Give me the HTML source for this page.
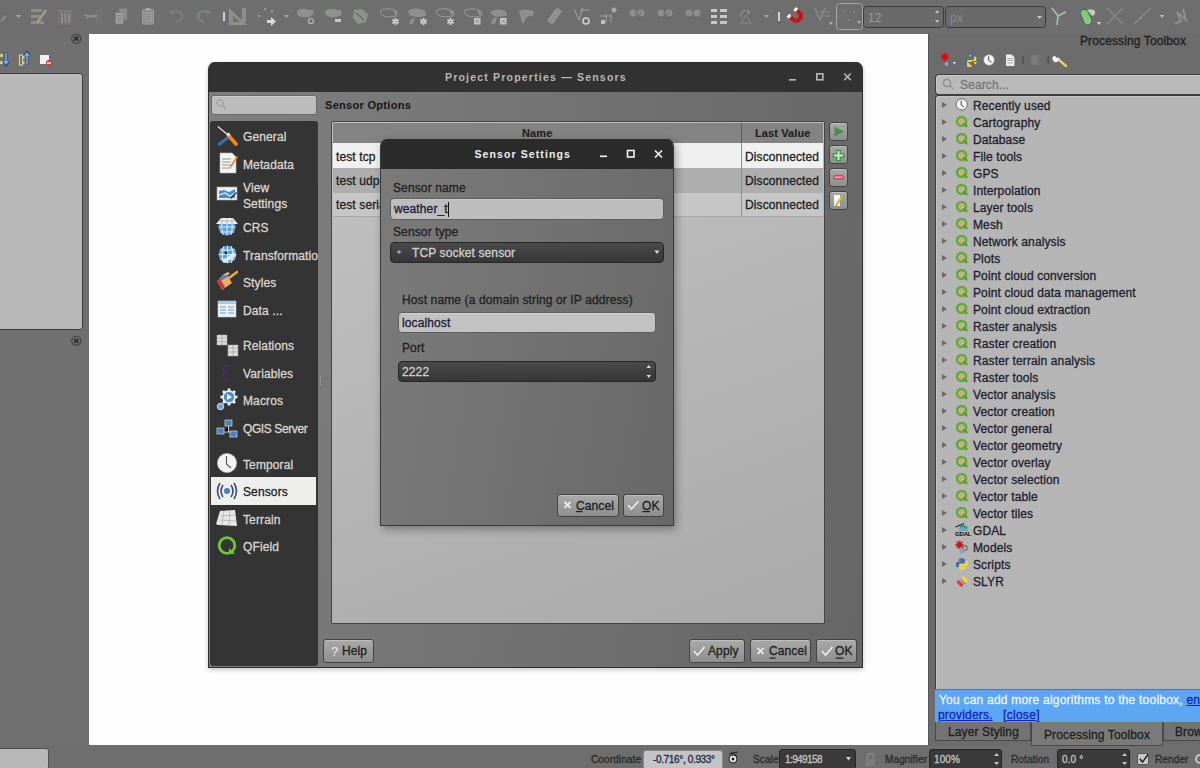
<!DOCTYPE html>
<html><head><meta charset="utf-8">
<style>
*{box-sizing:border-box}
html,body{margin:0;padding:0}
body{width:1200px;height:768px;position:relative;overflow:hidden;background:#6f6f6f;font-family:"Liberation Sans",sans-serif;font-size:12px;color:#1e1e1e}
.a{position:absolute}
.t{position:absolute;white-space:nowrap;line-height:1;-webkit-text-stroke-width:0.3px;letter-spacing:0.12px}
svg{position:absolute;overflow:visible}
.btn{position:absolute;border:1px solid #444;border-radius:3px;background:linear-gradient(#a9a9a9,#8e8e8e);box-shadow:inset 0 1px 0 rgba(255,255,255,.25)}
.ico{position:absolute}
</style></head><body>
<!-- top toolbar -->
<div class="a" style="left:0;top:0;width:1200px;height:34px;background:#6e6e6e"></div>
<!-- left dock -->
<div class="a" style="left:0;top:34px;width:89px;height:711px;background:#707070"></div>
<div class="a" style="left:-3px;top:73px;width:86px;height:257px;background:#b8b8b8;border:1px solid #3c3c3c;border-radius:3px"></div>
<!-- canvas -->
<div class="a" style="left:89px;top:34px;width:839px;height:711px;background:#fefefe"></div>
<!-- right dock -->
<div class="a" style="left:928px;top:34px;width:272px;height:711px;background:#6c6c6c;border-left:1px solid #555"></div>
<!-- status bar -->
<div class="a" style="left:0;top:745px;width:1200px;height:23px;background:#6e6e6e"></div>
<!-- toolbar icons -->
<svg style="left:0;top:0" width="1200" height="34">
<g fill="#8c8c8a" stroke="none">
 <!-- partial pencil -->
 <path d="M0 20 L5 15 L7 17 L2 22Z" fill="#858583"/>
 <path d="M16 15h5l-2.5 3z" fill="#a8a8a8"/>
 <!-- edit -->
 <rect x="31" y="9" width="11" height="3" fill="#8e8e86"/><rect x="31" y="15" width="9" height="3" fill="#8e8e86"/><rect x="31" y="21" width="13" height="3" fill="#8e8e86"/>
 <path d="M36 22 L45 9 L47 11 L38 24Z" fill="#9a9a90"/>
 <!-- trash -->
 <rect x="58" y="10" width="14" height="2" fill="#877c7c"/><rect x="59" y="12" width="12" height="12" fill="none" stroke="#867676" stroke-width="1"/>
 <rect x="61" y="13" width="2" height="10" fill="#8e8e8e"/><rect x="64.5" y="13" width="2" height="10" fill="#8e8e8e"/><rect x="68" y="13" width="2" height="10" fill="#8e8e8e"/>
 <!-- scissors -->
 <path d="M84 15 L97 17 M86 18 L97 15" stroke="#8d8d8d" stroke-width="1.3" fill="none"/><circle cx="99" cy="13" r="2.6" fill="none" stroke="#7a7a7a" stroke-width="1.2"/><circle cx="99" cy="20" r="2.6" fill="none" stroke="#7a7a7a" stroke-width="1.2"/>
 <!-- copy -->
 <rect x="119" y="8.5" width="8" height="11" fill="#8e8e8e" stroke="#7a7a7a" stroke-width=".8"/><rect x="115.5" y="12.5" width="8" height="11.5" fill="#a0a0a0" stroke="#7a7a7a" stroke-width=".8"/><path d="M117 15.5h5M117 17.5h5M117 19.5h5M117 21.5h4" stroke="#808080" stroke-width=".8"/>
 <!-- paste -->
 <rect x="142.5" y="9.5" width="11" height="14.5" rx="1" fill="#8a8a8a" stroke="#a0a0a0" stroke-width="1"/><rect x="145" y="12" width="7" height="10" fill="#9e9e9e"/><path d="M146 14.5h5M146 16.5h5M146 18.5h5M146 20.5h4" stroke="#808080" stroke-width=".8"/><rect x="145.5" y="8" width="5" height="2.5" fill="#a8a8a8"/>
 <!-- undo / redo -->
 <path d="M171 13 Q176 9 181 13 Q184 17 179 21 L176 22" fill="none" stroke="#7f7a7a" stroke-width="2.5"/><path d="M169 12 L174 10 L173 16Z" fill="#7f7a7a"/>
 <path d="M209 13 Q204 9 199 13 Q196 17 201 21 L204 22" fill="none" stroke="#7c8080" stroke-width="2.5"/><path d="M211 12 L206 10 L207 16Z" fill="#7c8080"/>
 <rect x="223" y="12" width="2" height="9" fill="#d0d0d0"/>
 <!-- ruler -->
 <path d="M229 8 L247 25 L229 25Z" fill="#8e8e8a"/><path d="M233 16 L240 22 L233 22Z" fill="#6e6e6e"/><rect x="242" y="8" width="4" height="14" fill="#8e8e80"/>
 <!-- dots arrow -->
 <circle cx="265" cy="9" r="1.2" fill="#9a9a9a"/><circle cx="272" cy="11" r="1.2" fill="#9a9a9a"/><circle cx="259" cy="16" r="1.2" fill="#9a9a9a"/>
 <path d="M267 20 h4 v-3 l5 4.5 -5 4.5 v-3 h-4z" fill="#d8d8d8"/>
 <path d="M284 15h5l-2.5 3z" fill="#a8a8a8"/>
 <!-- blobs -->
 <path d="M297 11 Q302 7 309 10 Q315 9 313 15 Q309 18 302 17 Q296 16 297 11Z" fill="#8e908e"/><circle cx="311" cy="21" r="2.5" fill="none" stroke="#b8b8b8" stroke-width="1.2"/>
 <path d="M325 11 Q330 7 337 10 Q343 9 341 15 Q337 18 330 17 Q324 16 325 11Z" fill="#8e908e"/><rect x="335" y="19" width="6" height="3" fill="#c8c8c8"/>
 <path d="M354 10 L362 9 L368 14 L366 22 L358 24 L353 18Z" fill="#8f918f"/><path d="M356 13 L364 20" stroke="#555" stroke-width="1"/>
 <path d="M381 10 Q388 7 394 10 Q398 12 396 16 Q390 18 384 16 Q379 14 381 10Z" fill="none" stroke="#999" stroke-width="1"/><path d="M393 10 Q400 9 396 17Z" fill="#8e908e"/><g transform="translate(395.5,21.5)"><path d="M0 -3.6V3.6M-3.1 -1.8L3.1 1.8M3.1 -1.8L-3.1 1.8" stroke="#d2d2d2" stroke-width="1.6"/><circle r="1.9" fill="#d2d2d2"/><circle r=".8" fill="#888"/></g>
 <path d="M409 10 Q416 7 423 10 Q428 12 425 16 Q418 18 412 16 Q407 14 409 10Z" fill="#8e908e"/><path d="M411 19 L415 18 L413 24 L409 24Z" fill="#8e8e8e"/><g transform="translate(423.5,21.5)"><path d="M0 -3.6V3.6M-3.1 -1.8L3.1 1.8M3.1 -1.8L-3.1 1.8" stroke="#d2d2d2" stroke-width="1.6"/><circle r="1.9" fill="#d2d2d2"/><circle r=".8" fill="#888"/></g>
 <path d="M437 10 Q444 7 451 10 Q456 12 453 16 Q446 18 440 16 Q435 14 437 10Z" fill="none" stroke="#9a9a9a" stroke-width="1"/><path d="M449 11 Q455 10 452 16Z" fill="#8e908e"/><g transform="translate(450.5,21.5)"><path d="M0 -3.6V3.6M-3.1 -1.8L3.1 1.8M3.1 -1.8L-3.1 1.8" stroke="#d2d2d2" stroke-width="1.6"/><circle r="1.9" fill="#d2d2d2"/><circle r=".8" fill="#888"/></g>
 <path d="M465 10 Q472 7 479 10 Q484 12 481 16 Q474 18 468 16 Q463 14 465 10Z" fill="none" stroke="#999" stroke-width="1"/><path d="M477 11 Q483 10 480 16Z" fill="#8e908e"/><rect x="474.0" y="18.0" width="6.5" height="6.5" fill="#c4c4c4"/><path d="M475.5 19.5L479.0 23.0M479.0 19.5L475.5 23.0" stroke="#8a8a8a" stroke-width="1"/>
 <path d="M491 11 Q498 8 505 11 Q508 13 506 16 Q500 17 494 16 Q490 14 491 11Z" fill="#8e908e"/><path d="M493 18 L497 17 L495 24 L491 24Z" fill="#8e8e8e"/><rect x="500.0" y="18.0" width="6.5" height="6.5" fill="#c4c4c4"/><path d="M501.5 19.5L505.0 23.0M505.0 19.5L501.5 23.0" stroke="#8a8a8a" stroke-width="1"/>
 <path d="M519 11 Q525 8 533 11 Q535 14 532 16 Q526 16 525 20 L523 24 Q520 18 519 11Z" fill="#8e908e"/>
 <path d="M548 20 L556 9 Q560 8 561 12 L553 23 Q549 24 548 20Z" fill="#8e908e" stroke="#9c9c9c" stroke-width=".8"/>
 <path d="M574 9 L579 20 L583 8 M580 10 h10" fill="none" stroke="#a2a2a2" stroke-width="1"/><circle cx="586" cy="21" r="3" fill="none" stroke="#d0d0d0" stroke-width="1.5"/>
 <path d="M600 16 h12 M606 14 v9 M611 14 v9" stroke="#9a9a9a" stroke-width="1"/><circle cx="614" cy="10" r="2.5" fill="#a8a8a8"/><rect x="601" y="20" width="4" height="4" fill="#c0c0c0"/>
 <circle cx="633" cy="13" r="3.5" fill="#8e8e8e"/><circle cx="641" cy="13" r="3.5" fill="#8e8e8e"/><path d="M635 24 L641 12 M643 24 L635 12" stroke="#6a6a6a" stroke-width="1"/>
 <circle cx="661" cy="13" r="3.5" fill="#8e8e8e"/><circle cx="669" cy="13" r="3.5" fill="#8e8e8e"/><path d="M663 24 L669 12 M671 24 L663 12" stroke="#6a6a6a" stroke-width="1"/>
 <circle cx="689" cy="13" r="3.5" fill="#8e8e8e"/><circle cx="697" cy="13" r="3.5" fill="#8e8e8e"/><path d="M689 17 Q690 22 693 24" stroke="#6a6a6a" stroke-width="1" fill="none"/>
 <rect x="711" y="9" width="6" height="3" fill="#c8c8c8"/><rect x="720" y="9" width="7" height="3" fill="#c8c8c8"/><rect x="711" y="15" width="6" height="3" fill="#c8c8c8"/><rect x="720" y="15" width="7" height="3" fill="#c8c8c8"/><rect x="711" y="21" width="6" height="3" fill="#c8c8c8"/><rect x="720" y="21" width="7" height="3" fill="#c8c8c8"/>
 <path d="M747 9 L751 12 L747 15Z" fill="#8a8a8a"/><path d="M741 23 L746 15 L751 23Z" fill="none" stroke="#8a8a8a" stroke-width="1"/><path d="M746 10 A6 6 0 0 0 741 17" fill="none" stroke="#858585" stroke-width="2"/>
 <path d="M764 15h5l-2.5 3z" fill="#a8a8a8"/>
 <rect x="778" y="12" width="2" height="9" fill="#cfcfcf"/>
 <!-- magnet -->
 <path d="M789.5 16 L793.2 19.7 A4.7 4.7 0 0 0 799.8 13.1 L796.1 9.4" fill="none" stroke="#c81414" stroke-width="4"/>
 <path d="M786.6 16.6 L789.4 13.8 L791.5 15.9 L788.7 18.7Z" fill="#fafafa"/><path d="M793.4 9.8 L796.2 7 L798.3 9.1 L795.5 11.9Z" fill="#fafafa"/>
 <path d="M815 8 L820 20 L825 8 M820 12 h10 M822 16 h8" fill="none" stroke="#8e8e8e" stroke-width="1.2"/><path d="M829 22h4l-2 3z" fill="#b0b0b0"/>
</g>
<rect x="836.5" y="3.5" width="26" height="26" rx="3" fill="none" stroke="#a6a6a6" stroke-width="1"/>
<circle cx="844" cy="11" r=".8" fill="#9a9a9a"/><circle cx="854" cy="12" r=".8" fill="#9a9a9a"/><circle cx="849" cy="20" r=".8" fill="#9a9a9a"/><path d="M857 21h4l-2 3z" fill="#b0b0b0"/>
<rect x="863.5" y="6.5" width="80" height="21" rx="3" fill="#6a6a6a" stroke="#3c3c3c" stroke-width="1"/>
<text x="868" y="22" font-family="Liberation Sans" font-size="12" fill="#9c9c9c">12</text>
<path d="M935 13 l2.2 -3 2.2 3z M935 20 l2.2 3 2.2 -3z" fill="#c0c0c0"/>
<rect x="945.5" y="6.5" width="100" height="21" rx="3" fill="#6a6a6a" stroke="#3c3c3c" stroke-width="1"/>
<text x="950" y="22" font-family="Liberation Sans" font-size="12" fill="#8c8c8c">px</text>
<path d="M1037 16 l2.5 3 2.5 -3z" fill="#c8c8c8"/>
<!-- green icons -->
<path d="M1052 8 L1058 16 L1066 12 M1058 16 L1057 25" fill="none" stroke="#9ec89a" stroke-width="1.6"/>
<path d="M1080 13 Q1082 8 1087 10 L1091 18 Q1093 24 1088 25 Q1084 25 1083 20Z" fill="#86c97e" stroke="#3a5a3a" stroke-width=".8"/><path d="M1087 10 Q1092 8 1095 11 Q1096 15 1092 16Z" fill="#c8c8c8"/>
<path d="M1097 22h4l-2 3z" fill="#d0d0d0"/>
<path d="M1107 8 L1123 24 M1123 8 L1107 24" stroke="#8a8a8a" stroke-width="1.2"/>
<path d="M1134 24 L1151 8" stroke="#8a8a8a" stroke-width="1.2"/><path d="M1140 17 l2 2" stroke="#9ab090" stroke-width="1"/>
<path d="M1160 15h4l-2 3z" fill="#c0c0c0"/>
<path d="M1175 24 L1181 21 L1177 12 L1186 20 L1183 9" fill="none" stroke="#8e8e8e" stroke-width="2"/>
</svg>
<!-- left dock items -->
<svg style="left:70px;top:32px" width="13" height="13"><circle cx="6.3" cy="6.7" r="4.6" fill="#6c6c6c" stroke="#404040" stroke-width="1.1"/><path d="M4.2 4.6L8.4 8.8M8.4 4.6L4.2 8.8" stroke="#262626" stroke-width="1.4"/></svg>
<svg style="left:70px;top:334px" width="13" height="13"><circle cx="6.3" cy="6.8" r="4.6" fill="#6c6c6c" stroke="#404040" stroke-width="1.1"/><path d="M4.2 4.7L8.4 8.9M8.4 4.7L4.2 8.9" stroke="#262626" stroke-width="1.4"/></svg>
<svg style="left:0;top:50px" width="60" height="18">
 <rect x="0" y="4" width="3" height="3" fill="#c8cc80"/><rect x="0" y="11" width="3" height="3" fill="#c8cc80"/>
 <path d="M6 2 V14 M3.3 11 L6 14.5 L8.7 11" fill="none" stroke="#2a4a78" stroke-width="3"/><path d="M6 2.5 V13.5 M3.8 11 L6 13.8 L8.2 11" fill="none" stroke="#78a8e0" stroke-width="1.6"/>
 <rect x="19.5" y="5" width="3" height="10" fill="none" stroke="#d8d8c8" stroke-width="1"/><rect x="22" y="6" width="2.5" height="3" fill="#c8cc80"/><rect x="22" y="11" width="2.5" height="3" fill="#c8cc80"/>
 <path d="M27 15 V3 M24.3 6 L27 2.5 L29.7 6" fill="none" stroke="#2a4a78" stroke-width="3"/><path d="M27 14.5 V3.5 M24.8 6 L27 3.2 L29.2 6" fill="none" stroke="#78a8e0" stroke-width="1.6"/>
 <rect x="40" y="5" width="9" height="9" fill="#f0f0f0"/><circle cx="49" cy="13" r="3" fill="#d03838"/><rect x="47" y="12.3" width="4" height="1.4" fill="#f4f4f4"/>
</svg>
<div class="a" style="left:-3px;top:748px;width:52px;height:22px;background:#b8b8b8;border:1px solid #505050;border-radius:3px"></div>
<!-- right dock toolbar -->
<svg style="left:936px;top:48px" width="140" height="24">
 <g transform="translate(8.8,9)"><path d="M0 -4.2 V4.2 M-4.2 0 H4.2 M-3 -3 L3 3 M3 -3 L-3 3" stroke="#e01818" stroke-width="1.6"/><circle r="2.6" fill="#d01010"/></g>
 <path d="M10.5 13.5 L12.5 16 L10.5 18.5 L8.5 16Z" fill="#98a8e0"/>
 <path d="M16.5 14h3.6l-1.8 2.4z" fill="#d8d8d8"/>
 <path d="M33 7 Q33 6 34.5 6 H36.5 Q38 6 38 7.5 V11 H33.5 V12 H30 Q28 12 28 14 Q28 16.5 30 16.5 H31 V14.5 Q31 13 33 13 H36.5 Q38 13 38 11.5" fill="#3a72b8"/>
 <circle cx="34.3" cy="7.8" r=".7" fill="#fff"/>
 <path d="M36 18 Q36 19 34.5 19 H32.5 Q31 19 31 17.5 V14 H35.5 V13 H39 Q40.5 13 40.5 11 Q40.5 8.5 39 8.5 H38 V10.5 Q38 12 36 12 H32.5 Q31 12 31 13.5" fill="#f4d03a"/>
 <path d="M37.5 14h3.6l-1.8 2.4z" fill="#d8d8d8"/>
 <circle cx="53" cy="12" r="5.4" fill="#f4f4f4" stroke="#8c8c8c" stroke-width=".6"/><path d="M52.6 8.4 V12.3 L55.5 14.3" fill="none" stroke="#444" stroke-width="1"/>
 <path d="M70 6.4 H75.5 L78.4 9.3 V18 H70Z" fill="#ececec"/><path d="M71.5 10.5 h5.5 M71.5 12.5 h5.5 M71.5 15 h5.5" stroke="#9c9c9c" stroke-width=".8"/>
 <rect x="86.6" y="8" width="1.2" height="7.6" fill="#4a4a4a"/>
 <path d="M95 7 H102 V17 H95Z" fill="#7c7c7c"/><path d="M99 15 L105 8" stroke="#787878" stroke-width="1.6"/>
 <rect x="111.6" y="8" width="1.2" height="7.6" fill="#4a4a4a"/>
 <path d="M122 11 L130 18" stroke="#e8d060" stroke-width="2.4" stroke-linecap="round"/>
 <path d="M118.5 7.8 A3.3 3.3 0 1 0 122.7 9.2 L121.2 10.2 L119.8 8.7Z" fill="#f4f4f4"/>
</svg>
<!-- status bar -->
<div class="t" style="left:591px;top:755px;font-size:10px;color:#2a2a2a">Coordinate</div>
<div class="a" style="left:643px;top:750px;width:80px;height:20px;background:#c4c4c4;border:1px solid #8a8a8a;border-radius:3px"></div>
<div class="t" style="left:653px;top:755px;font-size:10px;letter-spacing:-0.35px;color:#1a2a4a">-0.716°, 0.933°</div>
<svg style="left:727px;top:750px" width="14" height="16"><circle cx="6" cy="9" r="4" fill="#e8e8e8" stroke="#222" stroke-width="1"/><circle cx="6" cy="9" r="1.5" fill="#222"/><path d="M2 4 L11 2 M4 2 l6 4" stroke="#222" stroke-width="1"/></svg>
<div class="t" style="left:753px;top:755px;font-size:10px;color:#2a2a2a">Scale</div>
<div class="a" style="left:779px;top:749px;width:77px;height:21px;background:#3a3a3a;border:1px solid #262626;border-radius:3px"></div>
<div class="t" style="left:785px;top:755px;font-size:10px;letter-spacing:-0.6px;color:#c4c4c4">1:949158</div>
<svg style="left:845px;top:756px" width="8" height="6"><path d="M1 1h5l-2.5 3.5z" fill="#d0d0d0"/></svg>
<svg style="left:865px;top:752px" width="11" height="14"><path d="M2.5 7 V4.5 A3 3 0 0 1 8.5 4.5 V7" fill="none" stroke="#888" stroke-width="1.4"/><rect x="1" y="7" width="9" height="7" fill="#7c7c7c"/></svg>
<div class="t" style="left:885px;top:755px;font-size:10px;color:#2a2a2a">Magnifier</div>
<div class="a" style="left:929px;top:749px;width:73px;height:21px;background:#3a3a3a;border:1px solid #262626;border-radius:3px"></div>
<div class="t" style="left:934px;top:755px;font-size:10px;color:#c4c4c4">100%</div>
<svg style="left:994px;top:752px" width="6" height="14"><path d="M0 4 l2.5 -3 2.5 3z M0 10 l2.5 3 2.5 -3z" fill="#c8c8c8"/></svg>
<div class="t" style="left:1011px;top:755px;font-size:10px;color:#2a2a2a">Rotation</div>
<div class="a" style="left:1057px;top:749px;width:73px;height:21px;background:#3a3a3a;border:1px solid #262626;border-radius:3px"></div>
<div class="t" style="left:1062px;top:755px;font-size:10px;color:#c4c4c4">0.0 °</div>
<svg style="left:1122px;top:752px" width="6" height="14"><path d="M0 4 l2.5 -3 2.5 3z M0 10 l2.5 3 2.5 -3z" fill="#c8c8c8"/></svg>
<div class="a" style="left:1137px;top:753px;width:12px;height:12px;background:#c8c8c8;border:1px solid #555;border-radius:2px"></div>
<svg style="left:1138px;top:753px" width="12" height="12"><path d="M1.8 5.8 L4.5 9.2 L10 1.5" fill="none" stroke="#1a1a1a" stroke-width="1.4"/></svg>
<div class="t" style="left:1155px;top:755px;font-size:10px;color:#2a2a2a">Render</div>
<svg style="left:1193px;top:752px" width="10" height="14"><circle cx="7" cy="7" r="4" fill="none" stroke="#c8c8c8" stroke-width="2"/></svg>
<!-- right dock content -->
<div class="t" style="left:1080px;top:35px;font-size:12px;color:#1e1e1e">Processing Toolbox</div>
<div class="a" style="left:935px;top:74px;width:270px;height:21px;background:#b9b9b9;border-radius:4px;border:1px solid #3e3e3e;border-right:none;box-shadow:inset 1px 1px 0 #c8c8c8"></div>
<div class="t" style="left:960px;top:79px;font-size:12px;color:#777">Search...</div>
<svg style="left:942px;top:78px" width="12" height="12"><circle cx="5" cy="5" r="3.6" fill="none" stroke="#8a8a8a" stroke-width="1.2"/><path d="M7.6 7.6 L11 11" stroke="#8a8a8a" stroke-width="1.4"/></svg>
<div class="a" style="left:935px;top:95px;width:270px;height:594px;background:#b5b5b5;border:1px solid #3e3e3e;border-right:none;border-bottom:none;border-radius:3px 0 0 0;box-shadow:inset 1px 1px 0 #c4c4c4"></div>
<div class="a" style="left:942px;top:102px;width:0;height:0;border-left:5px solid #6a6a6a;border-top:3px solid transparent;border-bottom:3px solid transparent"></div>
<div class="t" style="left:973px;top:100px;font-size:12px;color:#1e1e2e">Recently used</div>
<svg style="left:955px;top:98px" width="14" height="14"><circle cx="6.7" cy="6.4" r="5.6" fill="#f6f6f6" stroke="#5a5a5a" stroke-width=".9"/><path d="M6.2 2.6V7L9 8.8" fill="none" stroke="#444" stroke-width="1"/></svg>
<div class="a" style="left:942px;top:119px;width:0;height:0;border-left:5px solid #6a6a6a;border-top:3px solid transparent;border-bottom:3px solid transparent"></div>
<div class="t" style="left:973px;top:117px;font-size:12px;color:#1e1e2e">Cartography</div>
<svg style="left:955px;top:115px" width="14" height="14"><circle cx="6.6" cy="6.4" r="4.5" fill="none" stroke="#62ac2e" stroke-width="2.5"/><path d="M8 8 L12.2 11.8" stroke="#5aa028" stroke-width="2.4"/><circle cx="6.8" cy="6.8" r="1.9" fill="#d8a060"/><circle cx="7.3" cy="7.3" r=".9" fill="#f0d070"/></svg>
<div class="a" style="left:942px;top:136px;width:0;height:0;border-left:5px solid #6a6a6a;border-top:3px solid transparent;border-bottom:3px solid transparent"></div>
<div class="t" style="left:973px;top:134px;font-size:12px;color:#1e1e2e">Database</div>
<svg style="left:955px;top:132px" width="14" height="14"><circle cx="6.6" cy="6.4" r="4.5" fill="none" stroke="#62ac2e" stroke-width="2.5"/><path d="M8 8 L12.2 11.8" stroke="#5aa028" stroke-width="2.4"/><circle cx="6.8" cy="6.8" r="1.9" fill="#d8a060"/><circle cx="7.3" cy="7.3" r=".9" fill="#f0d070"/></svg>
<div class="a" style="left:942px;top:153px;width:0;height:0;border-left:5px solid #6a6a6a;border-top:3px solid transparent;border-bottom:3px solid transparent"></div>
<div class="t" style="left:973px;top:151px;font-size:12px;color:#1e1e2e">File tools</div>
<svg style="left:955px;top:149px" width="14" height="14"><circle cx="6.6" cy="6.4" r="4.5" fill="none" stroke="#62ac2e" stroke-width="2.5"/><path d="M8 8 L12.2 11.8" stroke="#5aa028" stroke-width="2.4"/><circle cx="6.8" cy="6.8" r="1.9" fill="#d8a060"/><circle cx="7.3" cy="7.3" r=".9" fill="#f0d070"/></svg>
<div class="a" style="left:942px;top:170px;width:0;height:0;border-left:5px solid #6a6a6a;border-top:3px solid transparent;border-bottom:3px solid transparent"></div>
<div class="t" style="left:973px;top:168px;font-size:12px;color:#1e1e2e">GPS</div>
<svg style="left:955px;top:166px" width="14" height="14"><circle cx="6.6" cy="6.4" r="4.5" fill="none" stroke="#62ac2e" stroke-width="2.5"/><path d="M8 8 L12.2 11.8" stroke="#5aa028" stroke-width="2.4"/><circle cx="6.8" cy="6.8" r="1.9" fill="#d8a060"/><circle cx="7.3" cy="7.3" r=".9" fill="#f0d070"/></svg>
<div class="a" style="left:942px;top:187px;width:0;height:0;border-left:5px solid #6a6a6a;border-top:3px solid transparent;border-bottom:3px solid transparent"></div>
<div class="t" style="left:973px;top:185px;font-size:12px;color:#1e1e2e">Interpolation</div>
<svg style="left:955px;top:183px" width="14" height="14"><circle cx="6.6" cy="6.4" r="4.5" fill="none" stroke="#62ac2e" stroke-width="2.5"/><path d="M8 8 L12.2 11.8" stroke="#5aa028" stroke-width="2.4"/><circle cx="6.8" cy="6.8" r="1.9" fill="#d8a060"/><circle cx="7.3" cy="7.3" r=".9" fill="#f0d070"/></svg>
<div class="a" style="left:942px;top:204px;width:0;height:0;border-left:5px solid #6a6a6a;border-top:3px solid transparent;border-bottom:3px solid transparent"></div>
<div class="t" style="left:973px;top:202px;font-size:12px;color:#1e1e2e">Layer tools</div>
<svg style="left:955px;top:200px" width="14" height="14"><circle cx="6.6" cy="6.4" r="4.5" fill="none" stroke="#62ac2e" stroke-width="2.5"/><path d="M8 8 L12.2 11.8" stroke="#5aa028" stroke-width="2.4"/><circle cx="6.8" cy="6.8" r="1.9" fill="#d8a060"/><circle cx="7.3" cy="7.3" r=".9" fill="#f0d070"/></svg>
<div class="a" style="left:942px;top:221px;width:0;height:0;border-left:5px solid #6a6a6a;border-top:3px solid transparent;border-bottom:3px solid transparent"></div>
<div class="t" style="left:973px;top:219px;font-size:12px;color:#1e1e2e">Mesh</div>
<svg style="left:955px;top:217px" width="14" height="14"><circle cx="6.6" cy="6.4" r="4.5" fill="none" stroke="#62ac2e" stroke-width="2.5"/><path d="M8 8 L12.2 11.8" stroke="#5aa028" stroke-width="2.4"/><circle cx="6.8" cy="6.8" r="1.9" fill="#d8a060"/><circle cx="7.3" cy="7.3" r=".9" fill="#f0d070"/></svg>
<div class="a" style="left:942px;top:238px;width:0;height:0;border-left:5px solid #6a6a6a;border-top:3px solid transparent;border-bottom:3px solid transparent"></div>
<div class="t" style="left:973px;top:236px;font-size:12px;color:#1e1e2e">Network analysis</div>
<svg style="left:955px;top:234px" width="14" height="14"><circle cx="6.6" cy="6.4" r="4.5" fill="none" stroke="#62ac2e" stroke-width="2.5"/><path d="M8 8 L12.2 11.8" stroke="#5aa028" stroke-width="2.4"/><circle cx="6.8" cy="6.8" r="1.9" fill="#d8a060"/><circle cx="7.3" cy="7.3" r=".9" fill="#f0d070"/></svg>
<div class="a" style="left:942px;top:255px;width:0;height:0;border-left:5px solid #6a6a6a;border-top:3px solid transparent;border-bottom:3px solid transparent"></div>
<div class="t" style="left:973px;top:253px;font-size:12px;color:#1e1e2e">Plots</div>
<svg style="left:955px;top:251px" width="14" height="14"><circle cx="6.6" cy="6.4" r="4.5" fill="none" stroke="#62ac2e" stroke-width="2.5"/><path d="M8 8 L12.2 11.8" stroke="#5aa028" stroke-width="2.4"/><circle cx="6.8" cy="6.8" r="1.9" fill="#d8a060"/><circle cx="7.3" cy="7.3" r=".9" fill="#f0d070"/></svg>
<div class="a" style="left:942px;top:272px;width:0;height:0;border-left:5px solid #6a6a6a;border-top:3px solid transparent;border-bottom:3px solid transparent"></div>
<div class="t" style="left:973px;top:270px;font-size:12px;color:#1e1e2e">Point cloud conversion</div>
<svg style="left:955px;top:268px" width="14" height="14"><circle cx="6.6" cy="6.4" r="4.5" fill="none" stroke="#62ac2e" stroke-width="2.5"/><path d="M8 8 L12.2 11.8" stroke="#5aa028" stroke-width="2.4"/><circle cx="6.8" cy="6.8" r="1.9" fill="#d8a060"/><circle cx="7.3" cy="7.3" r=".9" fill="#f0d070"/></svg>
<div class="a" style="left:942px;top:289px;width:0;height:0;border-left:5px solid #6a6a6a;border-top:3px solid transparent;border-bottom:3px solid transparent"></div>
<div class="t" style="left:973px;top:287px;font-size:12px;color:#1e1e2e">Point cloud data management</div>
<svg style="left:955px;top:285px" width="14" height="14"><circle cx="6.6" cy="6.4" r="4.5" fill="none" stroke="#62ac2e" stroke-width="2.5"/><path d="M8 8 L12.2 11.8" stroke="#5aa028" stroke-width="2.4"/><circle cx="6.8" cy="6.8" r="1.9" fill="#d8a060"/><circle cx="7.3" cy="7.3" r=".9" fill="#f0d070"/></svg>
<div class="a" style="left:942px;top:306px;width:0;height:0;border-left:5px solid #6a6a6a;border-top:3px solid transparent;border-bottom:3px solid transparent"></div>
<div class="t" style="left:973px;top:304px;font-size:12px;color:#1e1e2e">Point cloud extraction</div>
<svg style="left:955px;top:302px" width="14" height="14"><circle cx="6.6" cy="6.4" r="4.5" fill="none" stroke="#62ac2e" stroke-width="2.5"/><path d="M8 8 L12.2 11.8" stroke="#5aa028" stroke-width="2.4"/><circle cx="6.8" cy="6.8" r="1.9" fill="#d8a060"/><circle cx="7.3" cy="7.3" r=".9" fill="#f0d070"/></svg>
<div class="a" style="left:942px;top:323px;width:0;height:0;border-left:5px solid #6a6a6a;border-top:3px solid transparent;border-bottom:3px solid transparent"></div>
<div class="t" style="left:973px;top:321px;font-size:12px;color:#1e1e2e">Raster analysis</div>
<svg style="left:955px;top:319px" width="14" height="14"><circle cx="6.6" cy="6.4" r="4.5" fill="none" stroke="#62ac2e" stroke-width="2.5"/><path d="M8 8 L12.2 11.8" stroke="#5aa028" stroke-width="2.4"/><circle cx="6.8" cy="6.8" r="1.9" fill="#d8a060"/><circle cx="7.3" cy="7.3" r=".9" fill="#f0d070"/></svg>
<div class="a" style="left:942px;top:340px;width:0;height:0;border-left:5px solid #6a6a6a;border-top:3px solid transparent;border-bottom:3px solid transparent"></div>
<div class="t" style="left:973px;top:338px;font-size:12px;color:#1e1e2e">Raster creation</div>
<svg style="left:955px;top:336px" width="14" height="14"><circle cx="6.6" cy="6.4" r="4.5" fill="none" stroke="#62ac2e" stroke-width="2.5"/><path d="M8 8 L12.2 11.8" stroke="#5aa028" stroke-width="2.4"/><circle cx="6.8" cy="6.8" r="1.9" fill="#d8a060"/><circle cx="7.3" cy="7.3" r=".9" fill="#f0d070"/></svg>
<div class="a" style="left:942px;top:357px;width:0;height:0;border-left:5px solid #6a6a6a;border-top:3px solid transparent;border-bottom:3px solid transparent"></div>
<div class="t" style="left:973px;top:355px;font-size:12px;color:#1e1e2e">Raster terrain analysis</div>
<svg style="left:955px;top:353px" width="14" height="14"><circle cx="6.6" cy="6.4" r="4.5" fill="none" stroke="#62ac2e" stroke-width="2.5"/><path d="M8 8 L12.2 11.8" stroke="#5aa028" stroke-width="2.4"/><circle cx="6.8" cy="6.8" r="1.9" fill="#d8a060"/><circle cx="7.3" cy="7.3" r=".9" fill="#f0d070"/></svg>
<div class="a" style="left:942px;top:374px;width:0;height:0;border-left:5px solid #6a6a6a;border-top:3px solid transparent;border-bottom:3px solid transparent"></div>
<div class="t" style="left:973px;top:372px;font-size:12px;color:#1e1e2e">Raster tools</div>
<svg style="left:955px;top:370px" width="14" height="14"><circle cx="6.6" cy="6.4" r="4.5" fill="none" stroke="#62ac2e" stroke-width="2.5"/><path d="M8 8 L12.2 11.8" stroke="#5aa028" stroke-width="2.4"/><circle cx="6.8" cy="6.8" r="1.9" fill="#d8a060"/><circle cx="7.3" cy="7.3" r=".9" fill="#f0d070"/></svg>
<div class="a" style="left:942px;top:391px;width:0;height:0;border-left:5px solid #6a6a6a;border-top:3px solid transparent;border-bottom:3px solid transparent"></div>
<div class="t" style="left:973px;top:389px;font-size:12px;color:#1e1e2e">Vector analysis</div>
<svg style="left:955px;top:387px" width="14" height="14"><circle cx="6.6" cy="6.4" r="4.5" fill="none" stroke="#62ac2e" stroke-width="2.5"/><path d="M8 8 L12.2 11.8" stroke="#5aa028" stroke-width="2.4"/><circle cx="6.8" cy="6.8" r="1.9" fill="#d8a060"/><circle cx="7.3" cy="7.3" r=".9" fill="#f0d070"/></svg>
<div class="a" style="left:942px;top:408px;width:0;height:0;border-left:5px solid #6a6a6a;border-top:3px solid transparent;border-bottom:3px solid transparent"></div>
<div class="t" style="left:973px;top:406px;font-size:12px;color:#1e1e2e">Vector creation</div>
<svg style="left:955px;top:404px" width="14" height="14"><circle cx="6.6" cy="6.4" r="4.5" fill="none" stroke="#62ac2e" stroke-width="2.5"/><path d="M8 8 L12.2 11.8" stroke="#5aa028" stroke-width="2.4"/><circle cx="6.8" cy="6.8" r="1.9" fill="#d8a060"/><circle cx="7.3" cy="7.3" r=".9" fill="#f0d070"/></svg>
<div class="a" style="left:942px;top:425px;width:0;height:0;border-left:5px solid #6a6a6a;border-top:3px solid transparent;border-bottom:3px solid transparent"></div>
<div class="t" style="left:973px;top:423px;font-size:12px;color:#1e1e2e">Vector general</div>
<svg style="left:955px;top:421px" width="14" height="14"><circle cx="6.6" cy="6.4" r="4.5" fill="none" stroke="#62ac2e" stroke-width="2.5"/><path d="M8 8 L12.2 11.8" stroke="#5aa028" stroke-width="2.4"/><circle cx="6.8" cy="6.8" r="1.9" fill="#d8a060"/><circle cx="7.3" cy="7.3" r=".9" fill="#f0d070"/></svg>
<div class="a" style="left:942px;top:442px;width:0;height:0;border-left:5px solid #6a6a6a;border-top:3px solid transparent;border-bottom:3px solid transparent"></div>
<div class="t" style="left:973px;top:440px;font-size:12px;color:#1e1e2e">Vector geometry</div>
<svg style="left:955px;top:438px" width="14" height="14"><circle cx="6.6" cy="6.4" r="4.5" fill="none" stroke="#62ac2e" stroke-width="2.5"/><path d="M8 8 L12.2 11.8" stroke="#5aa028" stroke-width="2.4"/><circle cx="6.8" cy="6.8" r="1.9" fill="#d8a060"/><circle cx="7.3" cy="7.3" r=".9" fill="#f0d070"/></svg>
<div class="a" style="left:942px;top:459px;width:0;height:0;border-left:5px solid #6a6a6a;border-top:3px solid transparent;border-bottom:3px solid transparent"></div>
<div class="t" style="left:973px;top:457px;font-size:12px;color:#1e1e2e">Vector overlay</div>
<svg style="left:955px;top:455px" width="14" height="14"><circle cx="6.6" cy="6.4" r="4.5" fill="none" stroke="#62ac2e" stroke-width="2.5"/><path d="M8 8 L12.2 11.8" stroke="#5aa028" stroke-width="2.4"/><circle cx="6.8" cy="6.8" r="1.9" fill="#d8a060"/><circle cx="7.3" cy="7.3" r=".9" fill="#f0d070"/></svg>
<div class="a" style="left:942px;top:476px;width:0;height:0;border-left:5px solid #6a6a6a;border-top:3px solid transparent;border-bottom:3px solid transparent"></div>
<div class="t" style="left:973px;top:474px;font-size:12px;color:#1e1e2e">Vector selection</div>
<svg style="left:955px;top:472px" width="14" height="14"><circle cx="6.6" cy="6.4" r="4.5" fill="none" stroke="#62ac2e" stroke-width="2.5"/><path d="M8 8 L12.2 11.8" stroke="#5aa028" stroke-width="2.4"/><circle cx="6.8" cy="6.8" r="1.9" fill="#d8a060"/><circle cx="7.3" cy="7.3" r=".9" fill="#f0d070"/></svg>
<div class="a" style="left:942px;top:493px;width:0;height:0;border-left:5px solid #6a6a6a;border-top:3px solid transparent;border-bottom:3px solid transparent"></div>
<div class="t" style="left:973px;top:491px;font-size:12px;color:#1e1e2e">Vector table</div>
<svg style="left:955px;top:489px" width="14" height="14"><circle cx="6.6" cy="6.4" r="4.5" fill="none" stroke="#62ac2e" stroke-width="2.5"/><path d="M8 8 L12.2 11.8" stroke="#5aa028" stroke-width="2.4"/><circle cx="6.8" cy="6.8" r="1.9" fill="#d8a060"/><circle cx="7.3" cy="7.3" r=".9" fill="#f0d070"/></svg>
<div class="a" style="left:942px;top:510px;width:0;height:0;border-left:5px solid #6a6a6a;border-top:3px solid transparent;border-bottom:3px solid transparent"></div>
<div class="t" style="left:973px;top:508px;font-size:12px;color:#1e1e2e">Vector tiles</div>
<svg style="left:955px;top:506px" width="14" height="14"><circle cx="6.6" cy="6.4" r="4.5" fill="none" stroke="#62ac2e" stroke-width="2.5"/><path d="M8 8 L12.2 11.8" stroke="#5aa028" stroke-width="2.4"/><circle cx="6.8" cy="6.8" r="1.9" fill="#d8a060"/><circle cx="7.3" cy="7.3" r=".9" fill="#f0d070"/></svg>
<div class="a" style="left:942px;top:527px;width:0;height:0;border-left:5px solid #6a6a6a;border-top:3px solid transparent;border-bottom:3px solid transparent"></div>
<div class="t" style="left:973px;top:525px;font-size:12px;color:#1e1e2e">GDAL</div>
<svg style="left:955px;top:523px" width="14" height="14"><circle cx="8.5" cy="6" r="4.6" fill="#5ab0c8"/><path d="M5 4 Q8.5 2 12 5" fill="none" stroke="#2a9a5a" stroke-width="1.5"/><path d="M0.5 4 L9 0.5" stroke="#222" stroke-width="1.1"/><rect x="0" y="8" width="14" height="6" fill="#b5b5b5"/><text x="0" y="13.2" font-size="6.2" font-weight="bold" fill="#111" font-family="Liberation Sans" letter-spacing="-0.3">GDAL</text></svg>
<div class="a" style="left:942px;top:544px;width:0;height:0;border-left:5px solid #6a6a6a;border-top:3px solid transparent;border-bottom:3px solid transparent"></div>
<div class="t" style="left:973px;top:542px;font-size:12px;color:#1e1e2e">Models</div>
<svg style="left:955px;top:540px" width="14" height="14"><circle cx="10" cy="8" r="2.3" fill="none" stroke="#7a7a7a" stroke-width="1.4"/><circle cx="6.8" cy="11" r="2.4" fill="#78a8d8"/><g transform="translate(4.5,4.8)"><path d="M0 -4.2V4.2M-4.2 0H4.2M-3 -3L3 3M3 -3L-3 3" stroke="#d81818" stroke-width="1.5"/><circle r="2.6" fill="#d01414"/></g></svg>
<div class="a" style="left:942px;top:561px;width:0;height:0;border-left:5px solid #6a6a6a;border-top:3px solid transparent;border-bottom:3px solid transparent"></div>
<div class="t" style="left:973px;top:559px;font-size:12px;color:#1e1e2e">Scripts</div>
<svg style="left:955px;top:557px" width="14" height="14"><path d="M5.5 1.2 H8 Q9.8 1.2 9.8 3 V6 Q9.8 7.4 8.4 7.4 H5.2 Q3.6 7.4 3.6 9 V10.2 H2.4 Q0.8 10.2 0.8 7.5 Q0.8 4.8 2.6 4.8 H6.2 V4.2 H3.8 V3 Q3.8 1.2 5.5 1.2Z" fill="#3a70b0"/><path d="M8.5 12.8 H6 Q4.2 12.8 4.2 11 V8 Q4.2 6.6 5.6 6.6 H8.8 Q10.4 6.6 10.4 5 V3.8 H11.6 Q13.2 3.8 13.2 6.5 Q13.2 9.2 11.4 9.2 H7.8 V9.8 H10.2 V11 Q10.2 12.8 8.5 12.8Z" fill="#f4d040"/></svg>
<div class="a" style="left:942px;top:578px;width:0;height:0;border-left:5px solid #6a6a6a;border-top:3px solid transparent;border-bottom:3px solid transparent"></div>
<div class="t" style="left:973px;top:576px;font-size:12px;color:#1e1e2e">SLYR</div>
<svg style="left:955px;top:574px" width="14" height="14"><path d="M7.5 3 L12.5 8" stroke="#f0d040" stroke-width="3.4"/><path d="M5.6 5.4 L10.4 10.2" stroke="#5a90c0" stroke-width="1.2"/><path d="M2.5 7 L7.5 12" stroke="#e04020" stroke-width="3.4"/></svg>
<div class="a" style="left:935px;top:690px;width:265px;height:32px;background:#5ca6f2"></div>
<div class="t" style="left:939px;top:694px;font-size:12px;letter-spacing:0.22px;color:#eef4fa">You can add more algorithms to the toolbox, <span style="color:#0b22c8;text-decoration:underline">en</span></div>
<div class="t" style="left:938px;top:709px;font-size:12px;letter-spacing:0.2px;color:#0b22c8;text-decoration:underline">providers.</div>
<div class="t" style="left:1003px;top:709px;font-size:12px;letter-spacing:0.3px;color:#0b22c8;text-decoration:underline">[close]</div>
<div class="a" style="left:935px;top:722px;width:96px;height:19px;background:#737373;border:1px solid #4a4a4a;border-top:none"></div>
<div class="t" style="left:948px;top:726px;font-size:12px;color:#1e1e1e">Layer Styling</div>
<div class="a" style="left:1031px;top:722px;width:132px;height:24px;background:#7a7a7a;border:1px solid #4a4a4a;border-top:none"></div>
<div class="t" style="left:1044px;top:729px;font-size:12px;color:#1e1e1e">Processing Toolbox</div>
<div class="a" style="left:1163px;top:722px;width:40px;height:19px;background:#737373;border:1px solid #4a4a4a;border-top:none"></div>
<div class="t" style="left:1175px;top:726px;font-size:12px;color:#1e1e1e">Brow</div>
<!-- main dialog -->
<div class="a" style="left:208px;top:62px;width:655px;height:606px;border-radius:7px 7px 0 0;box-shadow:0 2px 5px rgba(0,0,0,.22);border:1px solid #2e2e2e;border-top:none;background:linear-gradient(100deg,#808080 0%,#757575 40%,#6a6a6a 80%,#666666 100%);overflow:hidden">
  <div class="a" style="left:0;top:0;width:655px;height:30px;background:#323232"></div>
</div>
<div class="t" style="left:445px;top:72px;font-weight:bold;font-size:10.5px;letter-spacing:1.2px;color:#b8b8b8;-webkit-text-stroke-width:0">Project Properties — Sensors</div>
<!-- search -->
<div class="a" style="left:211px;top:95px;width:106px;height:20px;background:#bcbcbc;border-radius:3px;border:1px solid #6a6a6a;box-shadow:inset 0 1px 0 #cdcdcd"></div>
<div class="t" style="left:325px;top:100px;font-weight:bold;font-size:11px;letter-spacing:0.3px;color:#1a1a1a;-webkit-text-stroke-width:0.1px">Sensor Options</div>
<!-- list -->
<div class="a" style="left:210px;top:121px;width:108px;height:545px;background:#343434;border-radius:3px"></div>
<div class="a" style="left:211px;top:477px;width:105px;height:28px;background:#eeeeec"></div>
<!-- table -->
<div class="a" style="left:331px;top:121px;width:494px;height:503px;border:1px solid #444;border-radius:2px;background:linear-gradient(160deg,#c2c2c2,#aaaaaa)"></div>
<div class="a" style="left:333px;top:123px;width:490px;height:20px;background:#838383"></div>
<div class="a" style="left:333px;top:143px;width:490px;height:25px;background:#f0f0f0"></div>
<div class="a" style="left:333px;top:168px;width:490px;height:25px;background:#aeaeae"></div>
<div class="a" style="left:333px;top:193px;width:490px;height:24px;background:#c6c6c6"></div>
<div class="a" style="left:741px;top:123px;width:1px;height:20px;background:#5e5e5e"></div><div class="a" style="left:741px;top:143px;width:1px;height:74px;background:#909090"></div><div class="a" style="left:333px;top:216px;width:490px;height:1px;background:#a8a8a8"></div>
<div class="t" style="left:522px;top:128px;font-weight:bold;font-size:11px;-webkit-text-stroke-width:0.1px">Name</div>
<div class="t" style="left:755px;top:128px;font-weight:bold;font-size:11px;letter-spacing:0.1px;-webkit-text-stroke-width:0.1px">Last Value</div>
<div class="t" style="left:336px;top:151px">test tcp</div>
<div class="t" style="left:336px;top:175px">test udp</div>
<div class="t" style="left:336px;top:199px">test serial</div>
<div class="t" style="left:745px;top:151px">Disconnected</div>
<div class="t" style="left:745px;top:175px">Disconnected</div>
<div class="t" style="left:745px;top:199px">Disconnected</div>
<!-- side buttons -->
<div class="btn" style="left:829px;top:122px;width:19px;height:19px"></div>
<div class="btn" style="left:829px;top:145px;width:19px;height:19px"></div>
<div class="btn" style="left:829px;top:168px;width:19px;height:19px"></div>
<div class="btn" style="left:829px;top:191px;width:19px;height:19px"></div>
<!-- bottom buttons -->
<div class="btn" style="left:323px;top:639px;width:51px;height:24px"></div>
<div class="btn" style="left:689px;top:639px;width:56px;height:24px"></div>
<div class="btn" style="left:750px;top:639px;width:61px;height:24px"></div>
<div class="btn" style="left:816px;top:639px;width:41px;height:24px"></div>
<div class="t" style="left:342px;top:645px;font-size:12px">Help</div>
<div class="t" style="left:708px;top:645px;font-size:12px">Apply</div>
<div class="t" style="left:769px;top:645px;font-size:12px">Cancel</div>
<div class="t" style="left:835px;top:645px;font-size:12px">OK</div>
<!-- dialog list items -->
<div class="t" style="left:243px;top:131px;color:#dad6d0;font-size:12px">General</div>
<div class="t" style="left:243px;top:159px;color:#dad6d0;font-size:12px">Metadata</div>
<div class="t" style="left:243px;top:182px;color:#dad6d0;font-size:12px">View</div>
<div class="t" style="left:243px;top:198px;color:#dad6d0;font-size:12px">Settings</div>
<div class="t" style="left:243px;top:222px;color:#dad6d0;font-size:12px">CRS</div>
<div class="a" style="left:243px;top:247px;width:75px;height:16px;overflow:hidden"><div class="t" style="left:0;top:3px;color:#dad6d0;font-size:12px">Transformations</div></div>
<div class="t" style="left:243px;top:277px;color:#dad6d0;font-size:12px">Styles</div>
<div class="t" style="left:243px;top:305px;color:#dad6d0;font-size:12px">Data ...</div>
<div class="t" style="left:243px;top:340px;color:#dad6d0;font-size:12px">Relations</div>
<div class="t" style="left:243px;top:368px;color:#dad6d0;font-size:12px">Variables</div>
<div class="t" style="left:243px;top:395px;color:#dad6d0;font-size:12px">Macros</div>
<div class="t" style="left:243px;top:423px;color:#dad6d0;font-size:12px;letter-spacing:-0.4px">QGIS Server</div>
<div class="t" style="left:243px;top:459px;color:#dad6d0;font-size:12px">Temporal</div>
<div class="t" style="left:243px;top:486px;color:#1e1e1e;font-size:12px">Sensors</div>
<div class="t" style="left:243px;top:514px;color:#dad6d0;font-size:12px">Terrain</div>
<div class="t" style="left:243px;top:541px;color:#dad6d0;font-size:12px">QField</div>
<svg style="left:210px;top:120px" width="40" height="450">
 <!-- General -->
 <path d="M7.8 6.5 L18 15" stroke="#e4e4e4" stroke-width="1.3"/>
 <path d="M19.5 16.5 L9.2 24.2" stroke="#3a6eb0" stroke-width="3" stroke-linecap="round"/>
 <path d="M18.2 15.2 L26 24" stroke="#b85a10" stroke-width="4.2" stroke-linecap="round"/>
 <path d="M18.2 15.2 L26 24" stroke="#f08820" stroke-width="3" stroke-linecap="round"/>
 <path d="M16.5 14.5 L18.5 12.5 L20.5 14.5 L18.5 16.5Z" fill="#f2f2f2"/>
 <!-- Metadata -->
 <path d="M10 33 H22 L26 37 V53 H10Z" fill="#f4f4f4" stroke="#bbb" stroke-width=".6"/>
 <path d="M12 39 h9 M12 42 h9 M12 45 h9 M12 48 h9" stroke="#888" stroke-width=".9"/>
 <path d="M20 46 L26.5 36 L28 37 L21.5 47 L19.5 48Z" fill="#e88a2a"/>
 <!-- View settings -->
 <rect x="7" y="67" width="20" height="13" fill="#f0f0f0" stroke="#aaa" stroke-width=".6"/>
 <path d="M9 71 L14 70 L19 72 L25 69 V78 H9Z" fill="#4a8ad0"/><path d="M9 75 L15 73 L20 76 L25 73" fill="none" stroke="#e8f0f8" stroke-width="1.2"/>
 <path d="M20 78 L26 72 L27 73 L21 79Z" fill="#333"/>
 <!-- CRS -->
 <circle cx="17" cy="107" r="8.5" fill="#5aa0e0"/><path d="M8.5 107 H25.5 M17 98.5 V115.5 M10 102 H24 M10 112 H24 M13 99 Q10 107 13 115 M21 99 Q24 107 21 115" stroke="#f0f4f8" stroke-width=".9" fill="none"/>
 <path d="M6 104 L11 98 H23 L28 104Z" fill="#f0f0f0"/><path d="M9 101 H25 M12 98 V104 M17 98 V104 M22 98 V104" stroke="#999" stroke-width=".6"/>
 <!-- Transformations -->
 <circle cx="17.5" cy="134.5" r="8.8" fill="#5aa0e0"/><path d="M8.7 134.5 H26.3 M17.5 125.7 V143.3 M10 130 H25 M10 139 H25 M14 126 Q10.5 134.5 14 143 M21 126 Q24.5 134.5 21 143" stroke="#f0f4f8" stroke-width=".9" fill="none"/>
 <path d="M12 141 L24 132 L26 136 L15 143Z" fill="#e8e8e8"/><circle cx="16" cy="133" r="1.4" fill="#222"/>
 <!-- Styles -->
 <path d="M7 161 L17 155 L22 163 L12 170Z" fill="#e8b060"/><path d="M7 161 L10 159 L15 167 L12 170Z" fill="#d83030"/><path d="M9 158 L17 153 L19 156 L11 161Z" fill="#5a80c0"/><path d="M11 156 L18 152 L20 154Z" fill="#f0d040"/>
 <path d="M19 158 L27 152" stroke="#e8b040" stroke-width="2.4" stroke-linecap="round"/>
 <!-- Data -->
 <rect x="8" y="181" width="18" height="16" fill="#e8f0f8" stroke="#b8c8d8" stroke-width=".6"/><rect x="8" y="181" width="18" height="3" fill="#a8c8e8"/>
 <path d="M10 187 h6 M18 187 h6 M10 190 h6 M18 190 h6 M10 193 h6 M18 193 h6" stroke="#6aa0d8" stroke-width="1"/>
 <!-- Relations -->
 <rect x="7" y="215" width="10" height="10" fill="#dcdcdc" stroke="#aaa" stroke-width=".5"/><path d="M7 218 h10 M12 215 V225 M7 221.5 h10" stroke="#999" stroke-width=".6"/>
 <rect x="18" y="225" width="10" height="11" fill="#dcdcdc" stroke="#aaa" stroke-width=".5"/><path d="M18 228 h10 M23 225 V236 M18 232 h10" stroke="#999" stroke-width=".6"/>
 <!-- Variables -->
 <path d="M21 246.5 Q14 244 13.5 249 Q13.5 252 17 252 Q12 253 12.5 256 Q13 261 21 259" fill="none" stroke="#4a2c68" stroke-width="2.2"/>
 <!-- Macros -->
 <circle cx="19" cy="277" r="6.8" fill="#f0f0f0"/><path d="M19 268.5 V285.5 M10.5 277 H27.5 M13 271 L25 283 M25 271 L13 283" stroke="#f0f0f0" stroke-width="2.6"/>
 <circle cx="19" cy="277" r="5.2" fill="#4a90d0"/><path d="M17 274 L22 277 L17 280Z" fill="#fff"/>
 <circle cx="10.5" cy="286.5" r="3.2" fill="#6aa0e0" stroke="#e0e8f0" stroke-width="1"/>
 <!-- QGIS server -->
 <rect x="15" y="300" width="7" height="6" fill="#4a80c0" stroke="#d8d8d8" stroke-width=".7"/><rect x="7" y="308" width="7" height="6" fill="#4a80c0" stroke="#d8d8d8" stroke-width=".7"/><rect x="20" y="311" width="7" height="6" fill="#4a80c0" stroke="#d8d8d8" stroke-width=".7"/>
 <path d="M18.5 306 V312 H14 M18.5 312 H20" stroke="#ccc" stroke-width="1"/>
 <!-- Temporal -->
 <circle cx="17" cy="343" r="9.6" fill="#f2f2f2" stroke="#c8c8c8" stroke-width=".6"/><path d="M16.5 336 V344 L21 348" fill="none" stroke="#555" stroke-width="1.1"/>
 <!-- Sensors (row highlight at 357..385) -->
 <path d="M13 365 Q9 371 13 377" fill="none" stroke="#3c5070" stroke-width="1.6"/><path d="M10 363 Q5 371 10 379" fill="none" stroke="#3c5070" stroke-width="1.6"/>
 <path d="M21 365 Q25 371 21 377" fill="none" stroke="#3c5070" stroke-width="1.6"/><path d="M24 363 Q29 371 24 379" fill="none" stroke="#3c5070" stroke-width="1.6"/>
 <circle cx="17" cy="371" r="3" fill="#4a7ac8"/>
 <!-- Terrain -->
 <path d="M10 391 L25 390 L27 406 L8 405 L6 404Z" fill="#e8e8e8"/><path d="M10 396 L26 395 M9 400 L26 401 M14 391 L12 405 M20 390 L19 405" stroke="#aaa" stroke-width=".7"/>
 <!-- QField -->
 <circle cx="17" cy="425.5" r="7.8" fill="none" stroke="#6cc83a" stroke-width="2.8"/><path d="M19 428 L25 434 L19 434Z" fill="#6cc83a"/>
</svg>
<!-- sub dialog -->
<div class="a" style="left:380px;top:139px;width:294px;height:387px;border-radius:7px 7px 0 0;box-shadow:2px 3px 8px rgba(0,0,0,.35);background:linear-gradient(100deg,#7b7b7b 0%,#727272 50%,#686868 100%);overflow:hidden;border:1px solid #3a3a3a;border-top:none">
  <div class="a" style="left:0;top:0;width:294px;height:30px;background:#2b2b2b"></div>
</div>
<div class="t" style="left:474.5px;top:149px;font-weight:bold;font-size:10.5px;letter-spacing:1.1px;color:#eeeeee;-webkit-text-stroke-width:0">Sensor Settings</div>
<div class="t" style="left:393px;top:182px;color:#222">Sensor name</div>
<div class="a" style="left:390px;top:198px;width:274px;height:22px;background:#bdbdbd;border-radius:4px;border:1px solid #5e5e5e;box-shadow:inset 0 1px 0 #cacaca"></div>
<div class="t" style="left:394px;top:203px;color:#1a1a3a">weather_t</div>
<div class="t" style="left:393px;top:226px;color:#222">Sensor type</div>
<div class="a" style="left:390px;top:242px;width:274px;height:21px;background:linear-gradient(#4a4a4a,#363636);border-radius:4px;border:1px solid #262626"></div>
<div class="t" style="left:412px;top:247px;color:#d0d0d0">TCP socket sensor</div>
<div class="t" style="left:402px;top:294px;color:#222">Host name (a domain string or IP address)</div>
<div class="a" style="left:398px;top:312px;width:258px;height:21px;background:#c2c2c2;border-radius:4px;border:1px solid #5e5e5e;box-shadow:inset 0 1px 0 #d0d0d0"></div>
<div class="t" style="left:402px;top:317px;color:#1a1a3a">localhost</div>
<div class="t" style="left:402px;top:342px;color:#222">Port</div>
<div class="a" style="left:398px;top:361px;width:258px;height:21px;background:linear-gradient(#4a4a4a,#363636);border-radius:4px;border:1px solid #262626"></div>
<div class="t" style="left:402px;top:366px;color:#d0d0d0">2222</div>
<div class="btn" style="left:557px;top:494px;width:62px;height:23px"></div>
<div class="btn" style="left:623px;top:494px;width:41px;height:23px"></div>
<div class="t" style="left:576px;top:500px">Cancel</div>
<div class="t" style="left:642px;top:500px">OK</div>
<!-- dialog icons -->
<svg style="left:0;top:0" width="1200" height="768">
 <!-- title bar buttons main -->
 <rect x="789" y="79" width="7" height="1.6" fill="#b8b8b8"/>
 <rect x="816.8" y="73.8" width="6" height="6" fill="none" stroke="#b8b8b8" stroke-width="1.6"/>
 <path d="M844.2 73.5 L850.8 80.1 M850.8 73.5 L844.2 80.1" stroke="#b8b8b8" stroke-width="1.5"/>
 <!-- sub title buttons -->
 <rect x="600" y="155.5" width="7" height="1.6" fill="#f4f4f4"/>
 <rect x="627.5" y="150.5" width="6.5" height="6.5" fill="none" stroke="#f4f4f4" stroke-width="1.6"/>
 <path d="M655 150.5 L662 157.5 M662 150.5 L655 157.5" stroke="#f4f4f4" stroke-width="1.6"/>
 <!-- dialog search magnifier -->
 <circle cx="220" cy="103" r="3.3" fill="none" stroke="#9c9c9c" stroke-width="1"/><path d="M222.5 105.5 L226 109" stroke="#9c9c9c" stroke-width="1.2"/>
 <!-- splitter dots -->
 <g fill="#a0a0a0"><rect x="320" y="376" width="1" height="1"/><rect x="320" y="378" width="1" height="1"/><rect x="320" y="380" width="1" height="1"/><rect x="320" y="382" width="1" height="1"/><rect x="320" y="384" width="1" height="1"/></g>
 <!-- side buttons icons -->
 <path d="M834.5 126.5 L843.5 131.5 L834.5 136.5Z" fill="#4a8c4a"/>
 <path d="M836.8 150.3 h3.4 v3.5 h3.5 v3.4 h-3.5 v3.5 h-3.4 v-3.5 h-3.5 v-3.4 h3.5z" fill="#d0ecc8" stroke="#2f9a3a" stroke-width="1.3"/>
 <rect x="833" y="175" width="11" height="4.5" rx="1.5" fill="#d84848"/><rect x="834.5" y="176.6" width="8" height="1.3" fill="#f4d0d0"/>
 <path d="M834 195 H840 V206 H834Z" fill="#f8f8f8"/><path d="M836 204 L843 194 L844.5 195 L837.5 205 L835.5 206Z" fill="#e8d040" stroke="#8a7a20" stroke-width=".5"/>
 <!-- bottom buttons icons -->
 <text x="331" y="656" font-family="Liberation Sans" font-size="13" fill="#e8e8e8">?</text>
 <path d="M694 651 L697.5 655 L704.5 647" fill="none" stroke="#eeeeee" stroke-width="1.5"/>
 <path d="M757.5 648 L763.5 654 M763.5 648 L757.5 654" stroke="#f0f0f0" stroke-width="1.7"/>
 <path d="M822 651 L825.5 655 L832.5 647" fill="none" stroke="#eeeeee" stroke-width="1.5"/>
 <rect x="769.5" y="657.5" width="6" height="1.2" fill="#1e1e1e"/>
 <rect x="835.8" y="657.5" width="7.5" height="1.2" fill="#1e1e1e"/>
 <!-- sub dialog buttons -->
 <path d="M564.5 501.8 L570.5 507.8 M570.5 501.8 L564.5 507.8" stroke="#f0f0f0" stroke-width="1.7"/>
 <path d="M628 505 L631.5 509 L638.5 501" fill="none" stroke="#eeeeee" stroke-width="1.5"/>
 <rect x="576" y="511" width="6.5" height="1.2" fill="#1e1e1e"/>
 <rect x="642.5" y="511" width="7.5" height="1.2" fill="#1e1e1e"/>
 <!-- combo dot, arrow; spin arrows -->
 <circle cx="399" cy="252" r="1.8" fill="#7aa8e0"/>
 <path d="M654.5 250.5 h5 l-2.5 3.5z" fill="#d8d8d8"/>
 <path d="M646.5 368 l2.3 -3 2.3 3z M646.5 375 l2.3 3 2.3 -3z" fill="#d8d8d8"/>
 <!-- text cursor -->
 <rect x="448" y="202" width="1" height="15" fill="#111"/>
</svg>
</body></html>
